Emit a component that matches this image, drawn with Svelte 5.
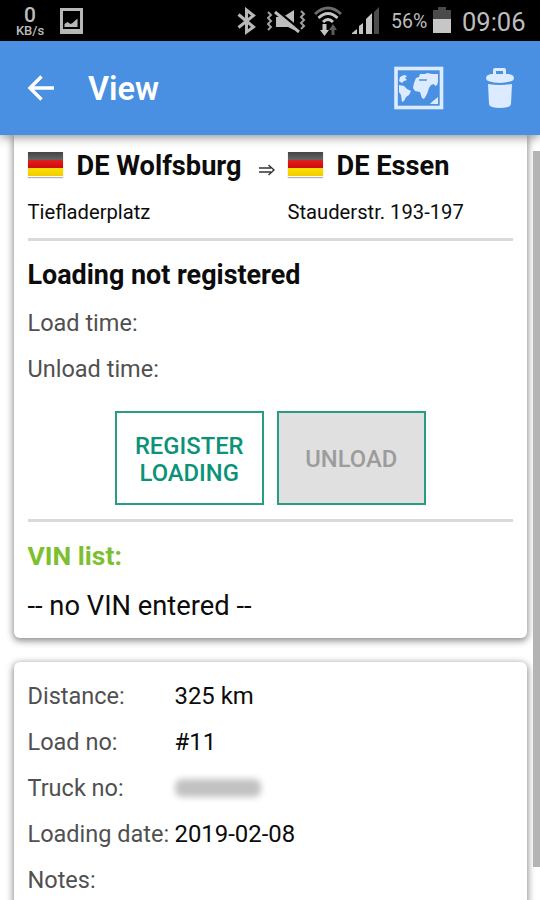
<script lang="ts">
  interface Stop {
    city: string;
    street: string;
  }

  const from: Stop = { city: "DE Wolfsburg", street: "Tiefladerplatz" };
  const to: Stop = { city: "DE Essen", street: "Stauderstr. 193-197" };

  const details = [
    { label: "Distance:", value: "325 km" },
    { label: "Load no:", value: "#11" },
    { label: "Truck no:", value: "", hidden: true },
    { label: "Loading date:", value: "2019-02-08" },
    { label: "Notes:", value: "" },
  ];
</script>

{#snippet flag()}
  <span class="flag"><i></i><i></i><i></i></span>
{/snippet}

<div class="screen">
  <div class="status">
    <div class="speed"><b>0</b><span>KB/s</span></div>
    <svg class="picture" width="24" height="27" viewBox="0 0 24 27">
      <path d="M0 0h23v26H0zM3 3v18h17V3z" fill="#b8b8b8" fill-rule="evenodd" />
      <path d="M4.500 19v-3l3-2 3 2 2-1 5-4.500V19z" fill="#b8b8b8" />
    </svg>
    <svg class="bluetooth" width="20" height="28" viewBox="0 0 20 28">
      <path d="M1.500 7.500 16.500 20 9.500 25V3l7 5.500L1.500 20.500" fill="none" stroke="#b8b8b8" stroke-width="3" />
    </svg>
    <svg class="muted" width="40" height="24" viewBox="0 0 40 24">
      <path d="M9 8h7l11-7v20l-6-3H9z" fill="#bdbdbd" />
      <path d="M9 1 32 20" stroke="#000" stroke-width="3" />
      <path d="M8 3 32 23" stroke="#bdbdbd" stroke-width="3" />
      <path
        d="m1 3 3 3-3 3 3 3-3 3 3 3-3 3M34 2l3 3-3 3 3 3-3 3 3 3-3 3"
        fill="none"
        stroke="#a0a0a0"
        stroke-width="2"
      />
    </svg>
    <svg class="wifi" width="28" height="32" viewBox="0 0 28 32">
      <g fill="none" stroke-width="3">
        <path d="M1 9Q14-3 27 9" stroke="#6c6c6c" />
        <path d="M4.500 13Q14 4 23.500 13M9 17q5-5 10 0" stroke="#c6c6c6" />
      </g>
      <path d="M8.500 19h4v6h2.500l-4.500 6L6 25h2.500z" fill="#c6c6c6" />
      <path d="m19 19 4 6h-2.500v5h-3v-5H15z" fill="#5c5c5c" />
    </svg>
    <svg class="signal" width="30" height="28" viewBox="0 0 30 28">
      <path d="M0 27v-1l5-4v5zM7 27v-8l4-3v11zM14 27V12l6-6v21z" fill="#c6c6c6" />
      <path d="M22 27V5l5-5v27z" fill="#4c4c4c" />
    </svg>
    <span class="percent">56%</span>
    <svg class="battery" width="18" height="26" viewBox="0 0 18 26">
      <path d="M0 3h5V0h8v3h5v10H0z" fill="#4a4a4a" />
      <path d="M0 12h18v14H0z" fill="#c6c6c6" />
    </svg>
    <span class="clock">09:06</span>
  </div>

  <header>
    <svg class="back" width="28" height="28" viewBox="0 0 28 28">
      <path d="M27 14H3M14.500 2.500 3 14l11.500 11.500" fill="none" stroke="#fff" stroke-width="3.400" />
    </svg>
    <h1>View</h1>
    <svg class="map" width="50" height="44" viewBox="0 0 50 44">
      <rect x="2" y="2.500" width="45.500" height="39" fill="none" stroke="#dcebff" stroke-width="3.600" />
      <g fill="#dcebff">
        <path d="m6 11 4-2 3 1-2 2 2 2-3 1-2 2-3-2z" />
        <path d="m5 19 5 1 3 3 4 2-2 4-3 2-2 4-2 1-1-7-2-3z" />
        <path d="m20 17 2-5 3-1 1-3 5 0 2-1 5 1 6 0v8l-1 3-2 1-1-2-3 1-2 3-2 6-3 5-2-1-2-6-5-1-2-3z" />
        <path d="m36 38 3-3 5-4v7z" />
      </g>
      <path d="M25 14h8" stroke="#4a90e2" stroke-width="1.500" />
    </svg>
    <svg class="trash" width="28" height="40" viewBox="0 0 28 40">
      <g fill="#dcebff">
        <path d="M7 7V2q0-2 2-2h9q2 0 2 2v5h-3V3h-7v4z" />
        <path d="M0 10q0-3 5-4h18q5 1 5 4 0 2-2 3-12 4-24 0-2-1-2-3z" />
        <path d="M2 16q12 2 24 0l-1 20q0 2-3 3-8 2-16 0-3-1-3-3z" />
      </g>
    </svg>
  </header>

  <main>
    <section class="card trip">
      <div class="route">
        <div class="city from">{@render flag()}{from.city}</div>
        <svg class="arrow" width="18" height="14" viewBox="0 0 18 14">
          <path d="M1 5h12M1 9h12M10.500 2 16 7l-5.500 5" fill="none" stroke="#333" stroke-width="1.400" />
        </svg>
        <div class="city">{@render flag()}{to.city}</div>
      </div>
      <div class="streets">
        <span>{from.street}</span>
        <span>{to.street}</span>
      </div>
      <hr />
      <h2>Loading not registered</h2>
      <div class="row label">Load time:</div>
      <div class="row label">Unload time:</div>
      <div class="actions">
        <button>REGISTER<br />LOADING</button>
        <button disabled>UNLOAD</button>
      </div>
      <hr />
      <h3>VIN list:</h3>
      <p>-- no VIN entered --</p>
    </section>

    <section class="card details">
      {#each details as item}
        <div class="row">
          <span class="label">{item.label}</span>
          {#if item.hidden}
            <span class="redacted"></span>
          {:else}
            <span class="value">{item.value}</span>
          {/if}
        </div>
      {/each}
    </section>

    <div class="scrollbar"></div>
  </main>
</div>

<style>
  :global(body) {
    margin: 0;
  }
  .screen {
    width: 540px;
    height: 900px;
    display: flex;
    flex-direction: column;
    overflow: hidden;
    background: #fff;
    color: #0c0c0c;
    font-family: Roboto, sans-serif;
  }
  svg {
    display: block;
    flex: none;
  }

  .status {
    height: 41px;
    flex: none;
    display: flex;
    align-items: center;
    background: #000;
    color: #bdbdbd;
    white-space: nowrap;
  }
  .speed {
    width: 30px;
    margin-left: 15px;
    display: flex;
    flex-direction: column;
    align-items: center;
  }
  .speed b {
    font-size: 21px;
    line-height: 20px;
    font-weight: 500;
  }
  .speed span {
    margin-top: -1px;
    font-size: 13px;
    line-height: 13px;
    font-weight: 500;
  }
  .picture {
    margin: 2px 0 0 15px;
  }
  .bluetooth {
    margin: 1px 0 0 153px;
  }
  .muted {
    margin-left: 10px;
  }
  .wifi {
    margin-left: 7px;
  }
  .signal {
    margin-left: 10px;
  }
  .percent {
    width: 36px;
    margin: 2px 0 0 9px;
    font-size: 19.500px;
  }
  .battery {
    margin: -2px 0 0 6px;
  }
  .clock {
    margin: 2px 0 0 11px;
    font-size: 25.500px;
  }

  header {
    height: 94px;
    flex: none;
    display: flex;
    align-items: center;
    background: #4a90e2;
    color: #fff;
    position: relative;
    box-shadow: 0 2px 10px rgba(0, 0, 0, 0.45);
    z-index: 1;
  }
  .back {
    margin-left: 27px;
  }
  h1 {
    flex: 1;
    margin: 1px 0 0 33px;
    font-size: 32.500px;
    font-weight: 600;
  }
  .trash {
    margin: 0 26px 0 42px;
  }

  main {
    flex: 1;
    min-height: 0;
    position: relative;
    padding: 0 13px 0 14px;
  }
  .card {
    background: #fff;
    padding: 0 14px 0 13.500px;
    box-shadow: 0 2px 7px 1px rgba(0, 0, 0, 0.45);
  }
  .trip {
    height: 503px;
    border-radius: 0 0 6px 6px;
  }
  .route {
    height: 60px;
    padding-top: 1px;
    box-sizing: border-box;
    display: flex;
    align-items: center;
  }
  .city {
    display: flex;
    align-items: center;
    font-size: 27.200px;
    font-weight: 700;
    white-space: nowrap;
  }
  .from {
    width: 230px;
  }
  .arrow {
    margin: 9px 12px 0 0;
  }
  .flag {
    width: 35px;
    height: 25px;
    margin: 0 14px 3px 0;
    display: flex;
    flex-direction: column;
    box-shadow: 0 1px 1px rgba(0, 0, 0, 0.3);
  }
  .flag i {
    flex: 1;
    background: linear-gradient(#444, #666);
  }
  .flag i:nth-child(2) {
    background: linear-gradient(#e02020, #d00808);
  }
  .flag i:nth-child(3) {
    background: linear-gradient(#ffe000, #f0cc00);
  }
  .streets {
    height: 34px;
    margin-bottom: 9px;
    display: grid;
    grid-template-columns: 260px 1fr;
    align-items: center;
    font-size: 20.200px;
  }
  hr {
    height: 3px;
    margin: 0;
    border: 0;
    background: #dadada;
  }
  h2 {
    margin: 0;
    font-size: 26.900px;
    line-height: 68px;
    height: 59px;
    font-weight: 700;
  }
  .row {
    height: 46px;
    display: flex;
    align-items: center;
    font-size: 23.500px;
  }
  .label {
    color: #505050;
  }
  .value {
    font-size: 23.900px;
  }
  .actions {
    display: flex;
    justify-content: center;
    gap: 13px;
    margin: 19px 0 14px;
  }
  button {
    width: 149px;
    height: 94px;
    padding: 3px 0 0;
    border: 2px solid #2a9c82;
    background: #fff;
    color: #0b9378;
    font: 500 23.800px/27px Roboto, sans-serif;
  }
  button:disabled {
    background: #e0e0e0;
    color: #9c9c9c;
  }
  h3 {
    margin: 0;
    font-size: 26.500px;
    line-height: 68px;
    font-weight: 700;
    color: #7cc030;
  }
  p {
    margin: 0;
    font-size: 27.300px;
    line-height: 33px;
  }

  .details {
    height: 300px;
    margin-top: 24px;
    padding-top: 11px;
    border-radius: 6px;
  }
  .details .label {
    width: 147px;
    white-space: nowrap;
  }
  .redacted {
    width: 86px;
    height: 18px;
    border-radius: 7px;
    background: #c2c2c2;
    filter: blur(3px);
  }
  .scrollbar {
    position: absolute;
    top: 16px;
    right: 0;
    width: 7px;
    height: 716px;
    background: #b4b4b4;
  }
</style>
